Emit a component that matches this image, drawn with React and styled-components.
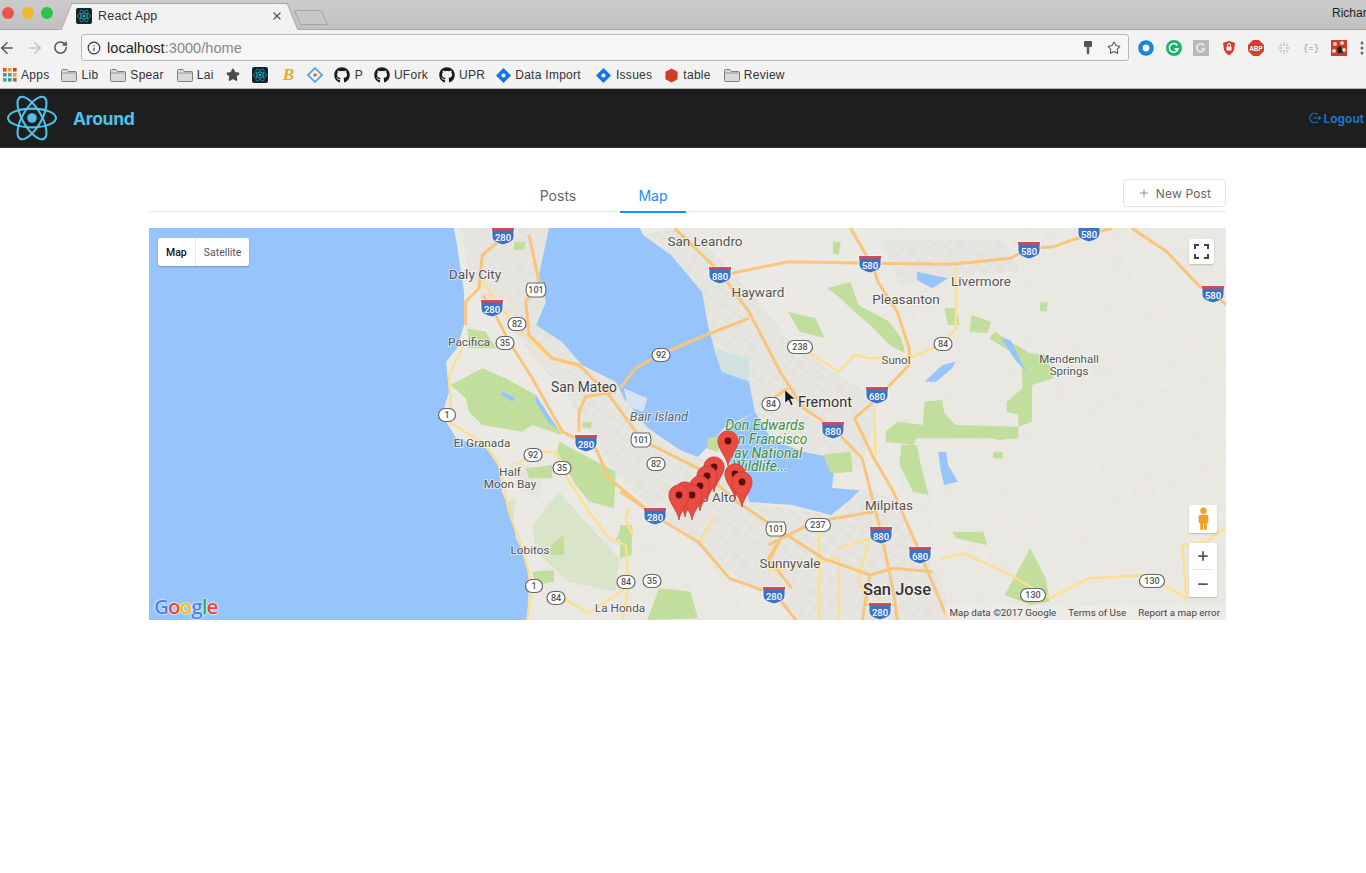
import React from "react";
import styled, { createGlobalStyle } from "styled-components";
import { ArrowLeft, ArrowRight, RotateCw, Info, Star, Plus, Minus, X } from "lucide-react";
import { FaGithub } from "react-icons/fa";

const Global = createGlobalStyle`
  html, body { margin: 0; padding: 0; background: #fff; overflow: hidden; }
  body { font-family: "Liberation Sans", Arial, sans-serif; }
  #root { width: 1366px; height: 873px; overflow: hidden; }
`;

const TitleBar = styled.div`
  height: 30px; box-sizing: border-box; display: flex; position: relative;
  background: linear-gradient(#cbcbcb, #c1c1c1); border-bottom: 1px solid #a6a6a6;
`;
const Lights = styled.div`display: flex; gap: 7.5px; padding: 7px 0 0 2px; width: 73px; box-sizing: border-box;`;
const Light = styled.span`width: 12px; height: 12px; border-radius: 50%; background: ${p => p.$c};`;
const Tab = styled.div`
  position: relative; margin-top: 3px; width: 213px; height: 27px; box-sizing: border-box;
  background: #f2f2f2; border-top: 1px solid #a8a8a8; display: flex; align-items: center; gap: 6px;
  font-size: 12.5px; letter-spacing: .2px; color: #333; padding: 0 3px 2px 3px; z-index: 1;
  &::before, &::after { content: ""; position: absolute; top: -1px; bottom: 0; width: 14px; background: #f2f2f2; border-top: 1px solid #a8a8a8; }
  &::before { left: -7px; transform: skewX(-22deg); border-left: 1px solid #a0a0a0; }
  &::after { right: -7px; transform: skewX(22deg); border-right: 1px solid #a0a0a0; }
`;
const TabTitle = styled.span`flex: 1; position: relative; z-index: 1; margin-left: 0;`;
const TabClose = styled.span`position: relative; z-index: 1; display: flex; color: #555;`;
const Fav = styled.span`width: 16px; height: 16px; background: #13232c; border-radius: 2px; display: inline-flex; align-items: center; justify-content: center; position: relative; z-index: 1; flex: none;`;
const NewTab = styled.div`
  width: 26px; height: 13px; margin: 10px 0 0 11px; background: #c6c6c6; border: 1px solid #a4a4a4; border-radius: 2px; transform: skewX(22deg);
`;
const User = styled.div`position: absolute; right: -3px; top: 6px; font-size: 12px; color: #222; width: 37px; overflow: hidden; white-space: nowrap;`;

const ToolBar = styled.div`height: 33px; box-sizing: border-box; background: #f2f2f2; display: flex; align-items: center; padding-top: 2px;`;
const NavBtn = styled.span`display: flex; width: ${p => p.$w}px; color: ${p => p.$c}; margin-left: ${p => p.$ml || 0}px; flex: none;`;
const Omni = styled.div`
  margin-left: 12px; width: 1048px; height: 27px; box-sizing: border-box; background: #f6f6f6;
  border: 1px solid #b8b8bc; border-radius: 3px; display: flex; align-items: center; padding: 0 7px 0 5px; color: #333; gap: 6px; flex: none;
`;
const Url = styled.div`flex: 1; font-size: 14.5px; color: #222; letter-spacing: .05px; span { color: #888; }`;
const KeyMark = styled.svg`margin-right: 8px;`;
const Exts = styled.div`display: flex; align-items: center; gap: 11.5px; margin-left: 9px; flex: none; height: 16px;`;
const Ext = styled.span`width: 16px; height: 16px; display: flex; flex: none;`;

const BookBar = styled.div`height: 26px; box-sizing: border-box; background: #f2f2f2; border-bottom: 1px solid #b4b4b4; display: flex; align-items: center; padding: 0 0 1px 2px; gap: 11px;`;
const Book = styled.div`display: flex; align-items: center; gap: ${p => p.$gap || 4}px; font-size: 12px; letter-spacing: .28px; color: #333; margin-left: ${p => p.$ml || 0}px; flex: none;`;
const BookIcon = styled.span`width: ${p => p.$w || 16}px; height: 16px; display: flex; align-items: center; justify-content: center; flex: none;`;
const Beta = styled.span`font: italic bold 17px "Liberation Serif", serif; color: #e8a92b;`;

const Header = styled.header`height: 58px; background: #1e1e1e; display: flex; align-items: center; padding-left: 7px; position: relative; border-bottom: 1px solid #333;`;
const Brand = styled.div`margin-left: 16px; font: bold 17.5px "Inter", sans-serif; letter-spacing: -.3px; color: #4bc3ea;`;
const Logout = styled.a`
  margin-left: auto; margin-right: 2px; display: flex; align-items: center; gap: 3px;
  font: 600 12px "Inter", sans-serif; color: #1a78d8;
`;

const Content = styled.main`width: 1077px; margin-left: 149px; padding-top: 32px;`;
const TabsBar = styled.div`height: 31px; border-bottom: 1.5px solid #e6e6e6; position: relative; display: flex; justify-content: center; margin-bottom: 15.5px;`;
const TabLinks = styled.div`display: flex; margin-left: 1px; position:absolute; left: 375px; bottom: -1.5px;`;
const TabLink = styled.div`
  width: 66px; height: 32px; margin-right: ${p => p.$mr || 0}px; box-sizing: border-box; text-align: center; padding-top: 6px;
  font: 14px "Inter", sans-serif; color: ${p => p.$active ? "#1890ff" : "#666"};
  border-bottom: 2px solid ${p => p.$active ? "#1890ff" : "transparent"};
`;
const NewBtn = styled.button`
  position: absolute; right: 0; top: -1px; width: 103px; height: 28px; box-sizing: border-box; background: #fff;
  border: 1.5px solid #e3e3e3; border-radius: 4px; display: flex; align-items: center; justify-content: center; gap: 6px;
  font: 12px "Inter", sans-serif; letter-spacing: .15px; color: #666; padding: 0;
`;

const MapBox = styled.div`position: relative; width: 1077px; height: 392px; overflow: hidden; background: #ebe9e3;`;
const MapSvg = styled.svg`display: block;`;
const Place = styled.text`
  font-family: Roboto, sans-serif; font-size: ${p => p.$s || 12}px; fill: ${p => p.$c || "#555"};
  font-style: ${p => p.$i ? "italic" : "normal"}; font-weight: ${p => p.$w || 400};
  text-anchor: middle; paint-order: stroke; stroke: #fff; stroke-width: 2px; stroke-opacity: .55;
`;
const ShieldText = styled.text`font-family: Roboto, sans-serif; font-size: ${p => p.$s || 9}px; fill: ${p => p.$c}; font-weight: 500; text-anchor: middle;`;

const TypeCtl = styled.div`position: absolute; left: 9px; top: 10px; height: 28px; display: flex; background: #fff; border-radius: 2px; box-shadow: 0 1px 2px rgba(0,0,0,.25); align-items: center; font: 10.5px Roboto, sans-serif;`;
const TypeBtn = styled.span`padding: 1px ${p => p.$px}px 0; line-height: 27px; color: ${p => p.$on ? "#111" : "#555"}; font-weight: ${p => p.$on ? 500 : 400}; border-left: ${p => p.$on ? "none" : "1px solid #e8e8e8"};`;
const Ctl = styled.div`position: absolute; left: ${p => p.$x}px; top: ${p => p.$y}px; width: ${p => p.$w}px; height: ${p => p.$h}px; background: #fff; border-radius: 2px; box-shadow: 0 1px 2px rgba(0,0,0,.2); display: flex; flex-direction: column; align-items: center; justify-content: center;`;
const ZoomRule = styled.span`width: 20px; height: 1px; background: #e4e4e4; margin: 6px 0 7px;`;
const GoogleLogo = styled.div`
  position: absolute; left: 5px; bottom: 0; font: 600 20.5px "Open Sans", sans-serif; letter-spacing: -.9px;
  text-shadow: 0 0 2px #fff, 0 0 2px #fff;
`;
const Letter = styled.span`color: ${p => p.$c};`;
const Attr = styled.div`
  position: absolute; right: 0; bottom: 0; height: 14px; box-sizing: border-box; display: flex; gap: 12px; padding: 0 6px 1px 5px; align-items: center;
  font: 9.8px Roboto, sans-serif; color: #444; background: rgba(240,239,235,.6);
`;

const Atom = ({ size, color, sw = 1.5 }) => (
  <svg width={size} height={size} viewBox="-24 -24 48 48" fill="none" stroke={color} strokeWidth={sw}>
    <ellipse rx="23" ry="9" />
    <ellipse rx="23" ry="9" transform="rotate(60)" />
    <ellipse rx="23" ry="9" transform="rotate(120)" />
    <circle r="4.6" fill={color} stroke="none" />
  </svg>
);

const FolderIcon = () => (
  <svg width="16" height="13" viewBox="0 0 16 13">
    <path d="M.5 1.5Q.5 .5 1.5 .5H6L7.5 2.5H14.5Q15.5 2.5 15.5 3.5V11.5Q15.5 12.5 14.5 12.5H1.5Q.5 12.5 .5 11.5Z" fill="#d9d9d9" stroke="#7f7f7f" />
    <path d="M1 4H15" stroke="#9a9a9a" />
  </svg>
);
const BlueDiamond = () => (
  <svg width="15" height="15" viewBox="0 0 16 16"><path d="M8 0L16 8L8 16L0 8Z" fill="#0d76f2" /><circle cx="8" cy="8" r="2.2" fill="#fff" /></svg>
);

const z4 = pts => pts.map(([x, y]) => `${(149 + x / 3).toFixed(1)},${(225 + y / 3).toFixed(1)}`).join(" ");
const z5 = pts => pts.map(([x, y]) => `${(620 + x / 2.56).toFixed(1)},${(225 + y / 3).toFixed(1)}`).join(" ");

const ocean = "149,228 454,228 457,245 464,292 464,325 457,348 446,362 449,392 442,415 456,438 486,448 499,465 502,492 512,515 516,538 526,558 529,585 527,620 149,620";
const bay = "549,228 539,275 546,302 536,325 562,342 582,365 616,382 625,400 648,428 680,450 698,457 714,440 724,428 755,412 749,382 714,348 708,325 702,292 671,255 643,235 640,228";
const south = "722,432 755,412 772,440 804,452 835,458 832,488 860,490 850,500 831,515 792,505 749,502 745,478 730,462";

const parks4 = [
  [[905,480],[1000,430],[1070,460],[1160,510],[1240,630],[1150,600],[1120,620],[1000,600],[960,560],[950,520]],
  [[1230,650],[1400,740],[1395,850],[1320,830],[1280,780],[1225,680]],
  [[955,310],[1010,320],[1040,370],[960,370]],
  [[1130,730],[1210,720],[1210,760],[1140,760]],
  [[1150,1040],[1215,1035],[1215,1070],[1160,1080]],
  [[1205,960],[1245,930],[1245,990],[1205,990]],
  [[1420,900],[1450,900],[1450,940],[1400,945]],
  [[1300,590],[1330,590],[1325,610],[1300,610]],
  [[1095,50],[1130,50],[1125,75],[1095,75]]
];
const parks5 = [
  [[680,620],[710,590],[775,600],[780,530],[825,525],[830,565],[860,600],[1020,605],[1055,590],[1055,480],[1110,460],[1090,390],[1050,385],[1000,350],[960,320],[945,340],[1000,380],[1030,420],[1030,490],[990,530],[990,560],[1020,570],[1020,640],[970,645],[950,640],[800,640],[760,640],[750,660],[680,650]],
  [[530,190],[590,170],[610,240],[690,290],[720,340],[730,385],[690,360],[640,300],[600,260],[560,215]],
  [[430,260],[500,280],[525,340],[460,320]],
  [[720,660],[760,660],[770,720],[790,810],[750,800],[715,720]],
  [[985,1110],[1050,970],[1090,1060],[1100,1130],[1050,1140]],
  [[100,1090],[180,1100],[200,1180],[70,1185]],
  [[830,250],[860,250],[870,300],[840,300]],
  [[0,900],[30,900],[30,990],[0,1000]],
  [[225,640],[265,630],[250,680],[222,670]],
  [[545,50],[565,50],[560,90],[545,85]],
  [[955,680],[980,680],[980,700],[955,700]],
  [[1075,232],[1095,232],[1092,260],[1075,258]],
  [[850,920],[930,920],[940,960],[860,940]],
  [[520,690],[590,680],[595,740],[540,745]],
  [[900,270],[950,290],[940,325],[895,320]]
];
const hills4 = [
  [[1150,900],[1230,800],[1300,880],[1410,1000],[1400,1100],[1260,1070],[1160,980]],
  [[1050,840],[1100,820],[1090,900],[1060,880]]
];
const urban = [
  "462,228 549,228 539,275 546,302 536,325 562,342 582,365 616,382 648,428 698,457 745,478 749,502 831,515 866,488 895,500 945,590 948,620 800,620 740,580 690,540 620,480 570,400 520,340 490,300 470,280",
  "643,235 671,255 702,292 708,325 714,348 749,382 755,412 772,440 804,452 835,458 860,470 880,400 830,370 790,340 740,280 700,240 680,228",
  "880,240 1000,240 1020,270 900,285",
  "508,460 545,470 540,500 520,490"
];
const lakes5 = [
  [[780,470],[825,420],[860,410],[850,430],[810,470]],
  [[815,680],[835,680],[840,720],[865,770],[830,780],[820,730]],
  [[760,140],[840,160],[800,190],[760,165]],
  [[975,340],[1000,345],[1040,440],[1015,410]]
];
const roads = [
  z5([[285,145],[430,110],[640,115],[850,118],[1000,100],[1045,70],[1110,65],[1200,28],[1260,10]]),
  z5([[1310,10],[1400,80],[1480,180],[1560,245]]),
  z5([[140,10],[255,140],[330,260],[410,440],[470,550],[545,610],[620,700],[670,930],[700,1100],[710,1185]]),
  z5([[590,10],[650,130],[660,170],[710,260],[740,370],[740,420],[650,530],[600,580],[650,700],[700,800],[770,990],[840,1185]]),
  z5([[0,490],[40,430],[100,390],[220,330],[330,280]]),
  z4([[1140,30],[1170,170],[1130,230],[1140,330],[1210,400],[1290,420],[1380,510],[1460,620],[1500,660]]),
  z5([[55,645],[200,730],[300,830],[400,910],[520,1000],[640,1050],[700,1030],[800,1040]]),
  z4([[1090,10],[1060,40],[1000,90],[990,190],[950,230],[950,300]]),
  z4([[1000,210],[1030,250],[1080,350],[1150,460],[1240,620],[1340,670],[1380,760],[1490,850]]),
  z5([[92,875],[200,950],[280,1060],[400,1110],[450,1185]]),
  z5([[380,960],[500,890],[650,860]]),
  z5([[0,800],[40,830],[92,875]]),
  z5([[385,1000],[420,920],[380,1000],[440,1090]]),
  z5([[380,530],[430,490]]),
  z5([[640,1050],[620,1185]]),
  z4([[1290,620],[1290,560],[1310,515],[1400,500]]),
];
const yellow = [
  z4([[940,370],[900,450],[905,520],[900,590],[1010,660],[1050,720],[1080,860],[1120,970],[1150,1080],[1135,1185]]),
  z4([[1100,720],[1160,680],[1220,680],[1260,770],[1320,860],[1380,940],[1430,960],[1440,1080],[1420,1185]]),
  z4([[1200,1110],[1260,1130],[1320,1165],[1430,1090]]),
  z4([[1440,850],[1430,880],[1450,930]]),
  z5([[480,380],[560,440],[600,390],[640,400],[740,400],[830,355],[860,310],[860,130]]),
  z5([[820,1000],[880,985],[1000,1050],[1100,1120],[1200,1060],[1350,1050],[1450,1120],[1440,960],[1500,950],[1560,900]]),
  z5([[240,870],[205,950]]),
  z5([[510,920],[510,1185]]),
  z5([[560,1185],[560,1000],[380,1040]]),
  z5([[650,1185],[610,1060],[640,940],[560,970]]),
  z5([[650,550],[655,690]]),
  z4([[1000,170],[1090,290],[1200,400],[1290,425]]),
];
const interstates = [[503,236,"280"],[492,308,"280"],[586,443,"280"],[655,516,"280"],[774,595,"280"],[880,611,"280"],[720,275,"880"],[881,535,"880"],[833,430,"880"],[870,264,"580"],[1029,250,"580"],[1089,233,"580"],[1213,294,"580"],[877,395,"680"],[920,555,"680"]];
const states = [[517,324,"82"],[656,464,"82"],[505,343,"35"],[562,468,"35"],[652,581,"35"],[533,455,"92"],[661,355,"92"],[447,415,"1"],[534,586,"1"],[556,598,"84"],[626,582,"84"],[771,404,"84"],[943,344,"84"],[800,347,"238"],[818,525,"237"],[1033,595,"130"],[1152,581,"130"]];
const hwy = [[536,290,"101"],[641,440,"101"],[776,529,"101"]];

const places = [
  ["Daly City",475,279,13.6],["San Leandro",705,246,13.5],["Hayward",758,297,13.5],["Livermore",981,286,13.5],["Pleasanton",906,304,13.5],
  ["Sunol",896,364,11.5],["Fremont",825,407,14.5,"#333"],["Mendenhall",1069,363,11.5],["Springs",1069,375,11.5],
  ["San Mateo",584,392,13.8,"#444"],["Pacifica",469,346,11.8],["El Granada",482,447,11.8],["Half",510,476,11.8],["Moon Bay",510,488,11.8],
  ["Lobitos",530,554,11.8],["La Honda",620,612,11.8],["Milpitas",889,510,13.5],["Sunnyvale",790,568,13.5],["Palo Alto",709,502,13.5],
];
const greens = [["Don Edwards",765,430],["San Francisco",765,444],["Bay National",764,458],["Wildlife...",760,471]];
const pins = [[728,441],[714,467],[707,476],[700,486],[685,492],[692,495],[679,495],[735,474],[742,482]];

const MapArt = () => (
  <MapSvg width="1077" height="392" viewBox="149 228 1077 392">
    <defs>
      <pattern id="streets" width="12" height="11" patternUnits="userSpaceOnUse" patternTransform="rotate(32)">
        <path d="M0 0H12M0 0V11" stroke="#fff" strokeWidth=".8" opacity=".55" />
      </pattern>
      <filter id="terrain" x="0" y="0" width="100%" height="100%">
        <feTurbulence type="fractalNoise" baseFrequency=".09" numOctaves="4" seed="7" />
        <feColorMatrix values="0 0 0 0 .6  0 0 0 0 .58  0 0 0 0 .52  .9 0 0 0 -.32" />
      </filter>
      <filter id="soft"><feGaussianBlur stdDeviation=".35" /></filter>
    </defs>
    <rect x="149" y="228" width="1077" height="392" fill="#ebe9e3" />
    <rect x="900" y="228" width="326" height="392" filter="url(#terrain)" opacity=".22" />
    <rect x="540" y="500" width="200" height="120" filter="url(#terrain)" opacity=".2" />
    <g filter="url(#soft)">
      {urban.map((u, i) => <polygon key={i} points={u} fill="#e5e3de" />)}
      {urban.map((u, i) => <polygon key={i} points={u} fill="url(#streets)" />)}
      {hills4.map((h, i) => <polygon key={i} points={z4(h)} fill="#d9e4c9" />)}
      {parks4.map((h, i) => <polygon key={i} points={z4(h)} fill="#c1de9d" />)}
      {parks5.map((h, i) => <polygon key={i} points={z5(h)} fill="#c1de9d" />)}
      <polygon points={ocean} fill="#98c4fc" />
      <polygon points={bay} fill="#98c4fc" />
      <polygon points={south} fill="#98c4fc" />
      <polygon points={z4([[1060,500],[1100,520],[1090,530],[1055,510]])} fill="#98c4fc" />
      <polygon points={z4([[1160,510],[1225,610],[1200,595],[1160,530]])} fill="#98c4fc" />
      <polygon points={z5([[225,640],[265,630],[250,680],[222,670]])} fill="#c1de9d" />
      <polygon points={z5([[10,490],[70,520],[60,560],[20,545]])} fill="#d7e3f0" />
      <polygon points={z5([[240,370],[330,400],[330,470],[260,440]])} fill="#cfe2df" />
      <polygon points={z5([[520,690],[590,680],[595,740],[540,745]])} fill="#c1de9d" />
      {lakes5.map((h, i) => <polygon key={i} points={z5(h)} fill="#98c4fc" />)}
      {yellow.map((r, i) => <polyline key={i} points={r} fill="none" stroke="#fcdf8f" strokeWidth="2.4" strokeLinejoin="round" />)}
      {roads.map((r, i) => <polyline key={i} points={r} fill="none" stroke="#f9c57b" strokeWidth="3" strokeLinejoin="round" />)}
    </g>
    {places.map(([t, x, y, s, c]) => <Place key={t} x={x} y={y} $s={s} $c={c}>{t}</Place>)}
    <Place x={659} y={421} $s={12.8} $i $c="#5c6670">Bair Island</Place>
    {greens.map(([t, x, y]) => <Place key={t} x={x} y={y} $s={14} $i $c="#3f8f3c">{t}</Place>)}
    <Place x={897} y={595} $s={16.5} $w={500} $c="#333">San Jose</Place>
    {interstates.map(([x, y, t], i) => (
      <g key={i} transform={`translate(${x} ${y})`}>
        <path d="M-11 -8H11V1Q11 6 0 9Q-11 6 -11 1Z" fill="#3b73c5" stroke="#fff" strokeWidth=".8" />
        <rect x="-11" y="-8" width="22" height="2.6" fill="#d64a4d" />
        <ShieldText y="4.5" $c="#fff" $s={9.5}>{t}</ShieldText>
      </g>
    ))}
    {states.map(([x, y, t], i) => {
      const w = t.length === 3 ? 25 : t.length === 2 ? 18 : 17;
      return (
        <g key={i} transform={`translate(${x} ${y})`}>
          <rect x={-w / 2} y="-6.5" width={w} height="13" rx="6.5" fill="#fff" stroke="#666" strokeWidth="1.2" />
          <ShieldText y="3.3" $c="#555">{t}</ShieldText>
        </g>
      );
    })}
    {hwy.map(([x, y, t], i) => (
      <g key={i} transform={`translate(${x} ${y})`}>
        <path d="M-8 -7H8Q10 -4 10 0Q10 5 6 7H-6Q-10 5 -10 0Q-10 -4 -8 -7Z" fill="#fff" stroke="#666" strokeWidth="1.1" />
        <ShieldText y="3.3" $c="#555">{t}</ShieldText>
      </g>
    ))}
    {pins.map(([x, y], i) => (
      <g key={i} transform={`translate(${x} ${y})`}>
        <path d="M0 25C-1.2 16 -10.2 8 -10.2 0A10.2 10.2 0 1 1 10.2 0C10.2 8 1.2 16 0 25Z" fill="#ea4b43" stroke="#c13a33" strokeWidth=".7" />
        <circle r="3.4" fill="#5a0f0d" />
      </g>
    ))}
    <path d="M785 390V403L788.5 400L791 405.5L793 404.5L790.5 399L795 399Z" fill="#111" stroke="#fff" strokeWidth=".5" />
  </MapSvg>
);

export default function App() {
  return (
    <>
      <Global />
      <TitleBar>
        <Lights>
          <Light $c="#e8554c" /><Light $c="#f2b62e" /><Light $c="#2ac24b" />
        </Lights>
        <Tab>
          <Fav><Atom size={14} color="#27b6c9" sw={2} /></Fav>
          <TabTitle>React App</TabTitle>
          <TabClose><X size={12} strokeWidth={2.5} /></TabClose>
        </Tab>
        <NewTab />
        <User>Richard</User>
      </TitleBar>
      <ToolBar>
        <NavBtn $w={28} $c="#555" $ml={-2}><ArrowLeft size={18} /></NavBtn>
        <NavBtn $w={27} $c="#c3c3cc"><ArrowRight size={18} /></NavBtn>
        <NavBtn $w={16} $c="#555"><RotateCw size={15} strokeWidth={2.4} /></NavBtn>
        <Omni>
          <Info size={14} strokeWidth={2} />
          <Url>localhost<span>:3000/home</span></Url>
          <KeyMark width="10" height="14" viewBox="0 0 10 14">
            <rect x="1" y="0" width="8" height="6" rx="1" fill="#555" /><rect x="3.8" y="5" width="2.4" height="8" fill="#555" />
          </KeyMark>
          <Star size={14} strokeWidth={1.8} color="#555" />
        </Omni>
        <Exts>
          <Ext><svg width="16" height="16"><circle cx="8" cy="8" r="5.6" fill="#fff" stroke="#1686d9" strokeWidth="4.4" /></svg></Ext>
          <Ext><svg width="16" height="16"><circle cx="8" cy="8" r="8" fill="#1fb06a" /><path d="M11.5 5.5A4.4 4.4 0 1 0 12 9H8.5" fill="none" stroke="#fff" strokeWidth="1.5" /></svg></Ext>
          <Ext><svg width="16" height="16"><rect width="16" height="16" fill="#b9b9b9" /><path d="M11 5.5A4 4 0 1 0 11.5 9H8.5" fill="none" stroke="#eee" strokeWidth="1.6" /></svg></Ext>
          <Ext><svg width="16" height="16"><path d="M8 1L14 3L13 10Q11 14 8 15.5Q5 14 3 10L2 3Z" fill="#d9382e" /><rect x="5.5" y="6.5" width="5" height="4" fill="#fff" /><path d="M6.5 6.5V5A1.5 1.5 0 0 1 9.5 5V6.5" fill="none" stroke="#fff" /></svg></Ext>
          <Ext><svg width="16" height="16"><path d="M5 0H11L16 5V11L11 16H5L0 11V5Z" fill="#d4402e" /><text x="8" y="10.5" fontSize="6.5" fontWeight="700" fill="#fff" textAnchor="middle" fontFamily="Liberation Sans">ABP</text></svg></Ext>
          <Ext><svg width="16" height="16" stroke="#c4c8d0" strokeWidth="1.5"><path d="M8 2V6M8 10V14M2 8H6M10 8H14M4 4L6 6M10 10L12 12M12 4L10 6M6 10L4 12" /></svg></Ext>
          <Ext><svg width="16" height="16"><text x="8" y="11" fontSize="9" fill="#8b99a0" textAnchor="middle" fontFamily="Liberation Mono">{"{=}"}</text></svg></Ext>
          <Ext><svg width="16" height="16"><rect width="16" height="16" fill="#cf3b2b" /><circle cx="4" cy="4" r="2" fill="#f2c9c0" /><circle cx="11" cy="3" r="2" fill="#f2c9c0" /><circle cx="3" cy="11" r="2" fill="#f2c9c0" /><circle cx="13" cy="10" r="2" fill="#f2c9c0" /><path d="M6 8L10 6L12 13L7 13Z" fill="#222" /></svg></Ext>
          <Ext><svg width="16" height="16" fill="#666"><circle cx="4" cy="3" r="1.5" /><circle cx="4" cy="8" r="1.5" /><circle cx="4" cy="13" r="1.5" /></svg></Ext>
        </Exts>
      </ToolBar>
      <BookBar>
        <Book>
          <BookIcon $w={15}>
            <svg width="14" height="14" viewBox="0 0 14 14">
              {[["#e04b3a", "#e8a12e", "#d8392c"], ["#3c8dde", "#4caf50", "#e8a12e"], ["#4caf50", "#3c8dde", "#e04b3a"]].map((r, j) => r.map((c, i) => <rect key={`${i}${j}`} x={i * 5} y={j * 5} width="3.6" height="3.6" fill={c} />))}
            </svg>
          </BookIcon>Apps
        </Book>
        <Book $ml={1}><BookIcon><FolderIcon /></BookIcon>Lib</Book>
        <Book $ml={1}><BookIcon><FolderIcon /></BookIcon>Spear</Book>
        <Book $ml={2}><BookIcon><FolderIcon /></BookIcon>Lai</Book>
        <Book $ml={0}><BookIcon><Star size={14} fill="#4a4a4a" color="#4a4a4a" /></BookIcon></Book>
        <Book><BookIcon><Fav><Atom size={14} color="#27b6c9" sw={2} /></Fav></BookIcon></Book>
        <Book $ml={2}><BookIcon><Beta>B</Beta></BookIcon></Book>
        <Book $ml={-1}><BookIcon>
          <svg width="16" height="16" viewBox="0 0 16 16"><path d="M8 1L15 8L8 15L1 8Z" fill="none" stroke="#4c9be8" strokeWidth="1.6" /><circle cx="8" cy="8" r="1.8" fill="#e8604a" /></svg>
        </BookIcon></Book>
        <Book $gap={5}><BookIcon><FaGithub size={16} color="#1b1b1b" /></BookIcon>P</Book>
        <Book $ml={0}><BookIcon><FaGithub size={16} color="#1b1b1b" /></BookIcon>UFork</Book>
        <Book><BookIcon><FaGithub size={16} color="#1b1b1b" /></BookIcon>UPR</Book>
        <Book $ml={-1}><BookIcon><BlueDiamond /></BookIcon>Data Import</Book>
        <Book $ml={4}><BookIcon><BlueDiamond /></BookIcon>Issues</Book>
        <Book $ml={0}><BookIcon>
          <svg width="15" height="15" viewBox="0 0 16 16"><path d="M8 .5L14.5 4V12L8 15.5L1.5 12V4Z" fill="#d43c25" /></svg>
        </BookIcon>table</Book>
        <Book $ml={2}><BookIcon><FolderIcon /></BookIcon>Review</Book>
      </BookBar>
      <Header>
        <Atom size={50} color="#4bc3ea" sw={2} />
        <Brand>Around</Brand>
        <Logout>
          <svg width="12" height="12" viewBox="0 0 12 12" fill="none" stroke="#1a78d8" strokeWidth="1.1">
            <path d="M8.5 2.2A4.8 4.8 0 1 0 8.5 9.8" /><path d="M4.5 6H11.5M9.8 4.4L11.5 6L9.8 7.6" />
          </svg>
          Logout
        </Logout>
      </Header>
      <Content>
        <TabsBar>
          <TabLinks>
            <TabLink $mr={29}>Posts</TabLink>
            <TabLink $active>Map</TabLink>
          </TabLinks>
          <NewBtn><Plus size={12} strokeWidth={1.4} />New Post</NewBtn>
        </TabsBar>
        <MapBox>
          <MapArt />
          <TypeCtl>
            <TypeBtn $on $px={8}>Map</TypeBtn>
            <TypeBtn $px={8}>Satellite</TypeBtn>
          </TypeCtl>
          <Ctl $x={1040} $y={11} $w={25} $h={25}>
            <svg width="15" height="15" viewBox="0 0 15 15" fill="none" stroke="#444" strokeWidth="2">
              <path d="M1 5V1H5M10 1H14V5M1 10V14H5M10 14H14V10" />
            </svg>
          </Ctl>
          <Ctl $x={1040} $y={277} $w={28} $h={28}>
            <svg width="13" height="24" viewBox="0 0 12 22" fill="#f0a21f">
              <circle cx="6" cy="3.4" r="3" /><rect x="1.5" y="7" width="9" height="8" rx="2" /><rect x="3" y="13" width="2.6" height="8" /><rect x="6.4" y="13" width="2.6" height="8" />
            </svg>
          </Ctl>
          <Ctl $x={1040} $y={315} $w={28} $h={54}>
            <Plus size={14} strokeWidth={3} color="#555" />
            <ZoomRule />
            <Minus size={14} strokeWidth={3} color="#555" />
          </Ctl>
          <GoogleLogo>
            <Letter $c="#4285f4">G</Letter><Letter $c="#ea4335">o</Letter><Letter $c="#fbbc05">o</Letter><Letter $c="#4285f4">g</Letter><Letter $c="#34a853">l</Letter><Letter $c="#ea4335">e</Letter>
          </GoogleLogo>
          <Attr><span>Map data ©2017 Google</span><span>Terms of Use</span><span>Report a map error</span></Attr>
        </MapBox>
      </Content>
    </>
  );
}
